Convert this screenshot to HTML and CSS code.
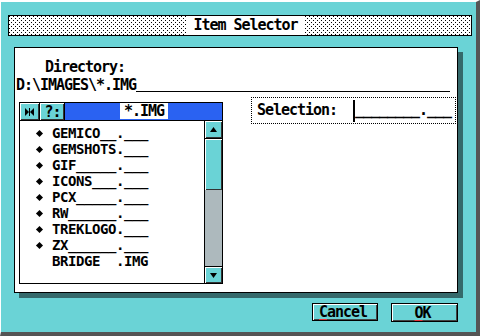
FILE: index.html
```html
<!DOCTYPE html>
<html lang="en">
<head>
  <meta charset="UTF-8" />
  <meta name="viewport" content="width=device-width, initial-scale=1.0"/>
  <title>Item Selector</title>
  <link rel="stylesheet" href="styles.css">
</head>
<body>
  <div class="window">
    <div class="titlebar">
      <span class="title">Item Selector</span>
    </div>

    <div class="panel">
      <div class="dir-label">Directory:</div>
      <div class="dir-path">
        <span>D:\IMAGES\*.IMG</span>
        <span class="dir-fill"></span>
      </div>

      <div class="picker">
        <div class="files">
          <div class="files-head">
            <div class="head-btn close-btn">
              <svg width="9" height="8" viewBox="0 0 9 8">
                <polygon points="0,0 4,4 0,8" fill="#000"/>
                <polygon points="9,0 5,4 9,8" fill="#000"/>
                <rect x="4" y="0" width="1" height="8" fill="#000"/>
              </svg>
            </div>
            <div class="head-btn drive-btn">?:</div>
            <div class="mask"><span class="mask-text">*.IMG</span></div>
          </div>
          <div class="files-body">
            <ul class="file-list">
              <li><span class="bullet"><i></i></span>GEMICO__.___</li>
              <li><span class="bullet"><i></i></span>GEMSHOTS.___</li>
              <li><span class="bullet"><i></i></span>GIF_____.___</li>
              <li><span class="bullet"><i></i></span>ICONS___.___</li>
              <li><span class="bullet"><i></i></span>PCX_____.___</li>
              <li><span class="bullet"><i></i></span>RW______.___</li>
              <li><span class="bullet"><i></i></span>TREKLOGO.___</li>
              <li><span class="bullet"><i></i></span>ZX______.___</li>
              <li><span class="bullet"></span>BRIDGE  .IMG</li>
            </ul>
            <div class="scrollbar">
              <div class="sb-btn">
                <svg width="7" height="5" viewBox="0 0 7 5"><polygon points="3.5,0 7,5 0,5" fill="#000"/></svg>
              </div>
              <div class="sb-thumb"></div>
              <div class="sb-track"></div>
              <div class="sb-btn sb-down">
                <svg width="7" height="5" viewBox="0 0 7 5"><polygon points="0,0 7,0 3.5,5" fill="#000"/></svg>
              </div>
            </div>
          </div>
        </div>

        <div class="selection"><span>Selection:  </span><span class="cursor"></span><span>________.___</span></div>
      </div>
    </div>

    <div class="buttons">
      <button class="btn"><u>C</u>ancel</button>
      <button class="btn btn-default"><u>O</u>K</button>
    </div>
  </div>
</body>
</html>
```

FILE: styles.css
```css
body {
  margin: 0;
  padding: 0;
  font: bold 15px/16px "DejaVu Sans Mono", monospace;
  letter-spacing: -1.03px;
  color: #000;
}
.window {
  width: 480px;
  height: 336px;
  box-sizing: border-box;
  background-color: #6ad3d6;
  border-top: 2px solid #fff;
  border-left: 1px solid #fff;
  border-right: 4px solid #555;
  border-bottom: 4px solid #555;
  overflow: hidden;
}
.titlebar {
  margin: 13px 0 0 7px;
  width: 464px;
  height: 21px;
  box-sizing: border-box;
  border: 1px solid #000;
  background-color: #fff;
  background-image:
    conic-gradient(from 270deg at 1px 1px, #000 25%, transparent 0),
    conic-gradient(from 270deg at 1px 1px, #000 25%, transparent 0);
  background-size: 4px 4px;
  background-position: 0 0, 2px 2px;
  display: flex;
  justify-content: center;
}
.title {
  background-color: #fff;
  padding: 0 6px;
  margin-left: 11px;
  line-height: 19px;
}
.panel {
  margin: 11px 0 0 13px;
  width: 444px;
  height: 246px;
  box-sizing: border-box;
  border: 1px solid #000;
  background-color: #fff;
  box-shadow: 5px 5px 0 #35696b;
}
.dir-label {
  margin: 11px 0 0 30px;
}
.dir-path {
  display: flex;
  height: 16px;
  margin: 2px 7px 0 1px;
}
.dir-fill {
  flex: 1;
  border-bottom: 1px solid #000;
  margin-bottom: 1px;
}
.picker {
  display: flex;
  align-items: flex-start;
  margin-top: 4px;
}
.files {
  margin: 5px 0 0 4px;
  width: 204px;
  height: 182px;
  box-sizing: border-box;
  border: 1px solid #000;
}
.files-head {
  display: flex;
  height: 18px;
  box-sizing: border-box;
  border-bottom: 1px solid #000;
}
.head-btn {
  background-color: #6ad3d6;
  box-shadow: inset 1px 1px #fff, inset -1px -1px #333;
  border-right: 1px solid #000;
  box-sizing: border-box;
  display: flex;
  align-items: center;
  justify-content: center;
}
.close-btn {
  width: 20px;
}
.drive-btn {
  width: 25px;
  padding-left: 1px;
}
.mask {
  flex: 1;
  background-color: #2a62f2;
  display: flex;
  justify-content: center;
  align-items: flex-start;
}
.mask-text {
  background-color: #fff;
  width: 48px;
  height: 16px;
  padding-left: 1px;
  box-sizing: border-box;
  text-align: center;
}
.files-body {
  display: flex;
  height: 162px;
}
.file-list {
  flex: 1;
  list-style: none;
  margin: 0;
  padding: 4px 0 0 0;
  font-size: 14px;
  letter-spacing: -0.43px;
}
.file-list li {
  display: flex;
  align-items: center;
  height: 16px;
  line-height: 14px;
  white-space: pre;
}
.bullet {
  flex: none;
  width: 32px;
  padding-left: 17px;
  box-sizing: border-box;
  display: flex;
  align-items: center;
}
.bullet i {
  width: 5px;
  height: 5px;
  background-color: #000;
  transform: rotate(45deg);
}
.scrollbar {
  width: 18px;
  box-sizing: border-box;
  border-left: 1px solid #000;
  display: flex;
  flex-direction: column;
}
.sb-btn {
  height: 18px;
  box-sizing: border-box;
  border-bottom: 1px solid #000;
  background-color: #6ad3d6;
  box-shadow: inset 1px 1px #fff, inset -1px -1px #333;
  display: flex;
  align-items: center;
  justify-content: center;
}
.sb-down {
  height: 17px;
  border-bottom: none;
  border-top: 1px solid #000;
}
.sb-thumb {
  height: 51px;
  background-color: #6ad3d6;
  box-shadow: inset 1px 1px #fff, inset -1px -1px #333;
}
.sb-track {
  flex: 1;
  background-color: #adb9bd;
}
.selection {
  margin-left: 28px;
  width: 205px;
  height: 27px;
  box-sizing: border-box;
  border: 1px dotted #000;
  padding: 4px 0 0 5px;
  display: flex;
  align-items: flex-start;
  white-space: pre;
}
.cursor {
  width: 2px;
  height: 22px;
  margin-top: -2px;
  background-color: #000;
}
.buttons {
  display: flex;
  justify-content: flex-end;
  align-items: flex-start;
  gap: 13px;
  margin: 10px 18px 0 0;
}
.btn {
  font: inherit;
  letter-spacing: inherit;
  color: #000;
  width: 66px;
  height: 18px;
  padding: 0 4px 0 0;
  box-sizing: border-box;
  background-color: #6ad3d6;
  border: 1px solid #000;
  box-shadow: inset 1px 1px #fff, inset -1px -1px #444;
  line-height: 16px;
}
.btn-default {
  width: 67px;
  height: 19px;
}
.btn u {
  text-decoration: underline;
  text-decoration-color: #e8323a;
  text-underline-offset: 2px;
}
```
